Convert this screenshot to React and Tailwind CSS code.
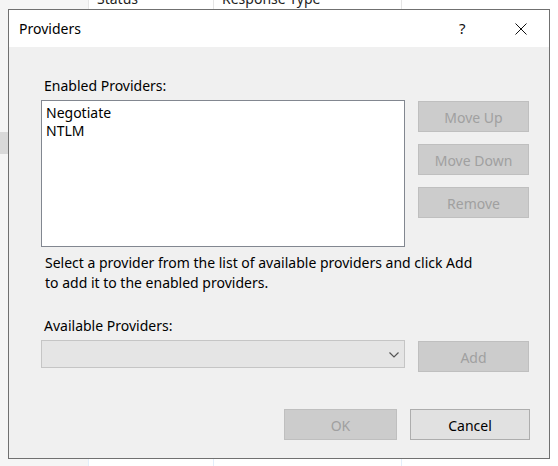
const FONT = "font-['Noto_Sans',sans-serif]";

function WinButton({ children, disabled, className = "" }) {
  return (
    <div
      className={`flex items-center justify-center h-[31px] pt-[1px] border text-[14px] ${
        disabled
          ? "bg-[#cccccc] border-[#bfbfbf] text-[#a0a0a0]"
          : "bg-[#e1e1e1] border-[#adadad] text-black"
      } ${className}`}
    >
      {children}
    </div>
  );
}

function CloseGlyph() {
  return (
    <svg width="12" height="12" viewBox="0 0 12 12" className="block">
      <path d="M0.5 0.5 L11.5 11.5 M11.5 0.5 L0.5 11.5" stroke="#111" strokeWidth="1" fill="none" />
    </svg>
  );
}

function Chevron() {
  return (
    <svg width="10" height="6" viewBox="0 0 10 6" className="block">
      <path d="M0.5 0.5 L5 5 L9.5 0.5" stroke="#555" strokeWidth="1.2" fill="none" />
    </svg>
  );
}

export default function App() {
  return (
    <div className={`relative w-[558px] h-[466px] overflow-hidden bg-white ${FONT}`}>
      {/* Background window behind the dialog */}
      <div className="flex h-full">
        <div className="w-[88px] h-full bg-[#f5f5f5] flex flex-col">
          <div className="h-[132px]" />
          <div className="h-[22px] bg-[#d9d9d9]" />
        </div>
        <div className="flex-1 flex flex-col">
          <div className="flex h-[24px] -mt-[14px] text-[14px] text-[#1e1e1e]">
            <div className="w-[125px] border-l border-[#e5e5e5] pl-[8px] flex items-center">Status</div>
            <div className="w-[188px] border-l border-[#e5e5e5] pl-[8px] flex items-center">Response Type</div>
            <div className="flex-1 border-l border-[#e5e5e5]" />
          </div>
          <div className="flex flex-1">
            <div className="w-[125px] border-l border-[#e3eefa]" />
            <div className="w-[188px] border-l border-[#e3eefa]" />
            <div className="flex-1 border-l border-[#e3eefa]" />
          </div>
        </div>
      </div>

      {/* Providers dialog */}
      <div className="absolute left-[8px] top-[9px] w-[542px] h-[450px] border border-[#707070] bg-[#f0f0f0] flex flex-col">
        <div className="h-[37px] bg-white flex items-center pl-[10px] shrink-0">
          <span className="text-[14px] text-black">Providers</span>
          <span className="ml-auto w-[14px] text-[15px] text-[#111] leading-none">?</span>
          <div className="ml-[42px] mr-[22px]">
            <CloseGlyph />
          </div>
        </div>

        <div className="flex flex-col pl-[32px] pr-[19px] pt-[29px] text-[14px] text-black">
          <div className="pl-[3px] leading-[20px]">Enabled Providers:</div>

          <div className="flex mt-[4px]">
            <div className="w-[364px] h-[147px] bg-white border border-[#828790] pl-[4px] pt-[3px] leading-[18px]">
              <div>Negotiate</div>
              <div>NTLM</div>
            </div>
            <div className="ml-[13px] mt-[1px] w-[111px] flex flex-col gap-[12px]">
              <WinButton disabled>Move Up</WinButton>
              <WinButton disabled>Move Down</WinButton>
              <WinButton disabled>Remove</WinButton>
            </div>
          </div>

          <div className="mt-[6px] pl-[4px] leading-[20px]">
            Select a provider from the list of available providers and click Add
            <br />
            to add it to the enabled providers.
          </div>

          <div className="mt-[23px] pl-[3px] leading-[20px]">Available Providers:</div>

          <div className="flex items-start mt-[4px]">
            <div className="w-[364px] h-[28px] bg-[#e5e5e5] border border-[#c5c5c5] flex items-center justify-end pr-[5px] pt-[1px]">
              <Chevron />
            </div>
            <WinButton disabled className="ml-[13px] mt-[1px] w-[111px]">Add</WinButton>
          </div>

          <div className="flex justify-end gap-[13px] mt-[37px]">
            <WinButton disabled className="w-[113px]">OK</WinButton>
            <WinButton className="w-[120px]">Cancel</WinButton>
          </div>
        </div>
      </div>
    </div>
  );
}
